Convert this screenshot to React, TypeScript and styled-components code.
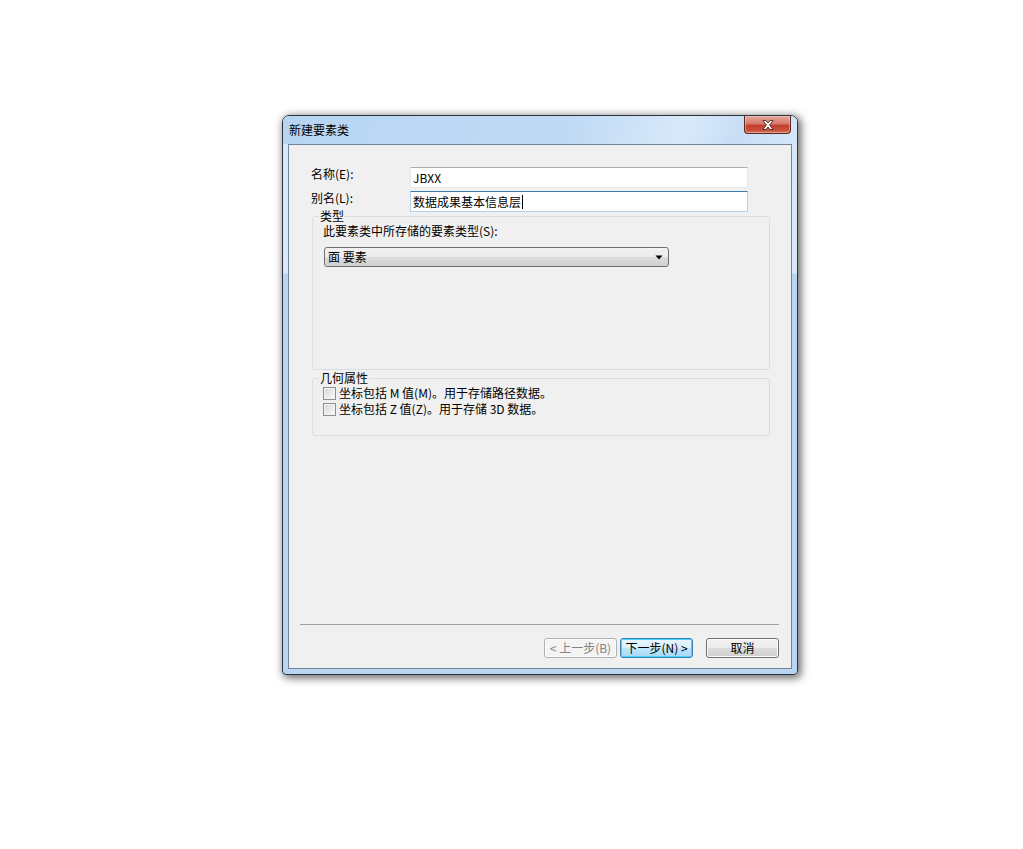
import styled, { createGlobalStyle } from "styled-components";

const GlobalStyle = createGlobalStyle`
  html, body {
    margin: 0;
    padding: 0;
    background: #ffffff;
  }
  body {
    font-family: "Noto Sans CJK SC", "Liberation Sans", sans-serif;
    font-size: 12px;
    color: #000000;
  }
`;

function CloseGlyph() {
  return (
    <svg width="12" height="10" viewBox="0 0 12 10">
      <path
        d="M1 0.5 H4 L6 3 L8 0.5 H11 L7.6 5 L11 9.5 H8 L6 7 L4 9.5 H1 L4.4 5 Z"
        fill="#ffffff"
        stroke="#4a2a28"
        strokeWidth="0.9"
        strokeLinejoin="round"
      />
    </svg>
  );
}

function Arrow() {
  return (
    <svg width="8" height="5" viewBox="0 0 8 5">
      <path d="M0.5 0.5 H7.5 L4 4.5 Z" fill="#000000" />
    </svg>
  );
}

function App() {
  return (
    <Page>
      <GlobalStyle />
      <Window>
        <TitleBar>
          <Title>新建要素类</Title>
          <CloseButton>
            <CloseGlyph />
          </CloseButton>
        </TitleBar>

        <Client>
          <FormGrid>
            <Label>名称(E):</Label>
            <TextInput>JBXX</TextInput>
            <Label>别名(L):</Label>
            <TextInput $focused>
              数据成果基本信息层<Caret />
            </TextInput>
          </FormGrid>

          <Group $gap={-2}>
            <Legend>类型</Legend>
            <TypeContent>
              <Label>此要素类中所存储的要素类型(S):</Label>
              <Combo>
                <span>面 要素</span>
                <Arrow />
              </Combo>
            </TypeContent>
          </Group>

          <Group $gap={2}>
            <Legend>几何属性</Legend>
            <CheckList>
              <CheckRow>
                <CheckBox />
                <span>坐标包括 M 值(M)。用于存储路径数据。</span>
              </CheckRow>
              <CheckRow>
                <CheckBox />
                <span>坐标包括 Z 值(Z)。用于存储 3D 数据。</span>
              </CheckRow>
            </CheckList>
          </Group>

          <Footer>
            <Separator />
            <ButtonRow>
              <Button $disabled>&lt; 上一步(B)</Button>
              <Button $default>下一步(N) &gt;</Button>
              <Button $spaced>取消</Button>
            </ButtonRow>
          </Footer>
        </Client>
      </Window>
    </Page>
  );
}

const Page = styled.div`
  min-height: 849px;
  padding: 115px 0 0 282px;
  box-sizing: border-box;
`;

const Window = styled.div`
  width: 516px;
  height: 560px;
  box-sizing: border-box;
  border: 1px solid #2c3440;
  border-radius: 7px 7px 4px 4px;
  display: flex;
  flex-direction: column;
  background: linear-gradient(
    to bottom,
    #d6e7f8 0px,
    #dbe9f9 157px,
    #b9d5f2 158px,
    #b9d5f2 100%
  );
  box-shadow: 2px 2px 9px 1px rgba(0, 0, 0, 0.6);
`;

const TitleBar = styled.div`
  height: 28px;
  flex: none;
  display: flex;
  justify-content: space-between;
  align-items: flex-start;
  padding: 0 6px 0 6px;
  border-radius: 6px 6px 0 0;
  background: linear-gradient(
    105deg,
    #b7d5f3 0%,
    #bfdaf5 55%,
    #d9e9f9 78%,
    #c8def6 88%,
    #d4e6f8 100%
  );
`;

const Title = styled.div`
  line-height: 28px;
  font-size: 12px;
  color: #000000;
`;

const CloseButton = styled.div`
  width: 47px;
  height: 18px;
  box-sizing: border-box;
  border: 1px solid #5a2620;
  border-top: none;
  border-radius: 0 0 4px 4px;
  display: flex;
  align-items: center;
  justify-content: center;
  background: linear-gradient(
    to bottom,
    #e4a89e 0%,
    #d7786a 45%,
    #c2402f 55%,
    #c9513d 85%,
    #d97a5e 100%
  );
  box-shadow: inset 0 0 0 1px rgba(255, 220, 210, 0.45);
`;

const Client = styled.div`
  flex: 1;
  margin: 0 5px 5px 5px;
  border: 1px solid #74869a;
  background: #f0f0f0;
  display: flex;
  flex-direction: column;
  padding-top: 22px;
`;

const FormGrid = styled.div`
  display: grid;
  grid-template-columns: 99px 338px;
  grid-auto-rows: 21px;
  row-gap: 3px;
  padding-left: 22px;
`;

const Label = styled.div`
  line-height: 14px;
  white-space: nowrap;
`;

const TextInput = styled.div<{ $focused?: boolean }>`
  box-sizing: border-box;
  height: 21px;
  border: 1px solid ${(p) => (p.$focused ? "#b5cfe7" : "#e3e9ef")};
  border-top-color: ${(p) => (p.$focused ? "#3d7bad" : "#abadb3")};
  background: #ffffff;
  padding: 0 2px;
  line-height: 19px;
  display: flex;
  align-items: center;
`;

const Caret = styled.span`
  display: inline-block;
  width: 1px;
  height: 14px;
  background: #000000;
  margin-left: 1px;
`;

const Group = styled.fieldset<{ $gap: number }>`
  margin: ${(p) => p.$gap}px 0 0 23px;
  width: 458px;
  box-sizing: border-box;
  border: 1px solid #d5dfe5;
  border-radius: 3px;
  padding: 0 10px 0 10px;
  min-inline-size: 0;
`;

const Legend = styled.legend`
  line-height: 12px;
  padding: 0 1px;
  margin-left: -4px;
`;

const TypeContent = styled.div`
  height: 147px;
  padding-top: 2px;
  box-sizing: border-box;
`;

const Combo = styled.div`
  margin: 9px 0 0 1px;
  width: 345px;
  height: 20px;
  box-sizing: border-box;
  border: 1px solid #707070;
  border-radius: 3px;
  display: flex;
  align-items: center;
  justify-content: space-between;
  padding: 0 5px 0 3px;
  line-height: 18px;
  background: linear-gradient(
    to bottom,
    #f2f2f2 0%,
    #ebebeb 50%,
    #dddddd 51%,
    #cfcfcf 100%
  );
`;

const CheckList = styled.div`
  padding-top: 1px;
  padding-bottom: 18px;
`;

const CheckRow = styled.div`
  display: flex;
  align-items: center;
  gap: 3px;
  height: 16px;
  line-height: 14px;
  white-space: nowrap;
`;

const CheckBox = styled.span`
  flex: none;
  width: 13px;
  height: 13px;
  box-sizing: border-box;
  border: 1px solid #8f8f8f;
  background: linear-gradient(135deg, #d6d6d6 0%, #ececec 60%, #fbfbfb 100%);
  box-shadow: inset 0 0 0 1px #f4f4f4;
`;

const Footer = styled.div`
  margin-top: auto;
  padding: 0 12px 10px 11px;
`;

const Separator = styled.div`
  height: 1px;
  background: #a0a0a0;
`;

const ButtonRow = styled.div`
  display: flex;
  justify-content: flex-end;
  gap: 3px;
  margin-top: 13px;
`;

const Button = styled.div<{
  $disabled?: boolean;
  $default?: boolean;
  $spaced?: boolean;
}>`
  width: 73px;
  height: 20px;
  box-sizing: border-box;
  margin-left: ${(p) => (p.$spaced ? "10px" : "0")};
  border: 1px solid
    ${(p) => (p.$disabled ? "#adb2b5" : p.$default ? "#3c7fb1" : "#707070")};
  border-radius: 3px;
  display: flex;
  align-items: center;
  justify-content: center;
  line-height: 18px;
  white-space: nowrap;
  color: ${(p) => (p.$disabled ? "#838383" : "#000000")};
  background: ${(p) =>
    p.$disabled
      ? "#f4f4f4"
      : p.$default
      ? "linear-gradient(to bottom, #eaf6fd 0%, #d9f0fc 50%, #bee6fd 51%, #a7d9f5 100%)"
      : "linear-gradient(to bottom, #f2f2f2 0%, #ebebeb 50%, #dddddd 51%, #cfcfcf 100%)"};
  box-shadow: ${(p) =>
    p.$default ? "inset 0 0 0 1px #48d4f9" : "inset 0 0 0 1px #fcfcfc"};
`;

export default App;
